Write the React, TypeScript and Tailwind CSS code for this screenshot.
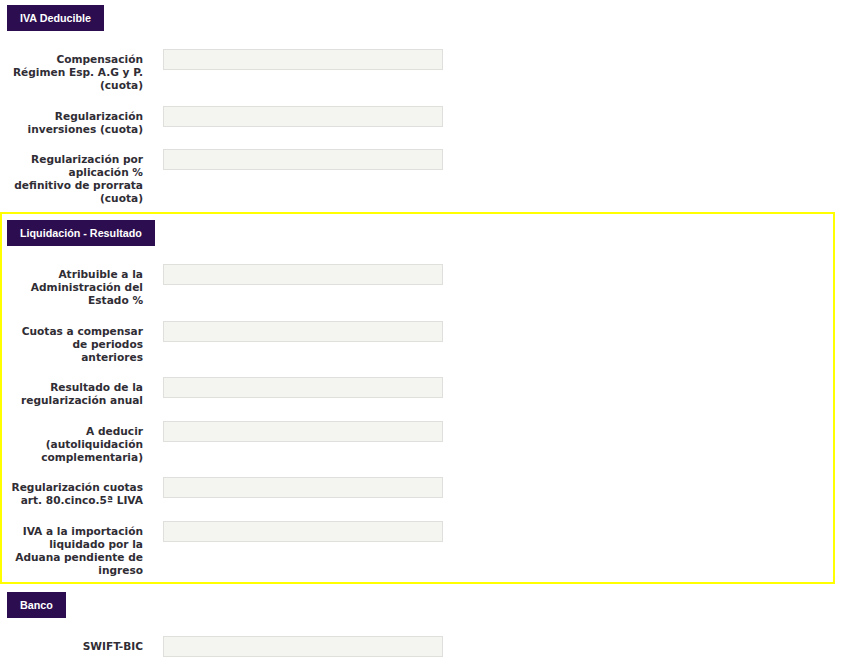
const sections = [
  {
    title: "IVA Deducible",
    highlight: false,
    rows: [
      "Compensación Régimen Esp. A.G y P. (cuota)",
      "Regularización inversiones (cuota)",
      "Regularización por aplicación % definitivo de prorrata (cuota)",
    ],
  },
  {
    title: "Liquidación - Resultado",
    highlight: true,
    rows: [
      "Atribuible a la Administración del Estado %",
      "Cuotas a compensar de periodos anteriores",
      "Resultado de la regularización anual",
      "A deducir (autoliquidación complementaria)",
      "Regularización cuotas art. 80.cinco.5ª LIVA",
      "IVA a la importación liquidado por la Aduana pendiente de ingreso",
    ],
  },
  {
    title: "Banco",
    highlight: false,
    rows: ["SWIFT-BIC"],
  },
];

function Field({ label }: { label: string }) {
  return (
    <div className="flex items-start">
      <label className="ml-[3px] w-[133px] shrink-0 pt-[4px] text-right text-[10.6px] leading-[13px] font-bold text-[#302d35] [font-family:'DejaVu_Sans',sans-serif]">
        {label}
      </label>
      <input
        type="text"
        className="ml-[20px] h-[21px] w-[280px] border border-[#dfdfdc] bg-[#f4f5f0] outline-none"
      />
    </div>
  );
}

export default function App() {
  return (
    <div className="min-h-[659px] w-[851px] bg-white pt-[2px]">
      <div className="flex w-[835px] flex-col gap-[5px]">
        {sections.map((s) => (
          <section
            key={s.title}
            className={
              s.highlight
                ? "border-2 border-[#ffff00] px-[5px] py-[5px]"
                : "border-2 border-transparent px-[5px] py-0"
            }
          >
            <div className="inline-flex h-[26px] items-center bg-[#2c0e50] px-[13px] text-[10.75px] font-bold text-white [font-family:'Liberation_Sans',Arial,sans-serif]">
              {s.title}
            </div>
            <div className="mt-[18px] flex flex-col gap-[13.5px]">
              {s.rows.map((r) => (
                <Field key={r} label={r} />
              ))}
            </div>
          </section>
        ))}
      </div>
    </div>
  );
}
